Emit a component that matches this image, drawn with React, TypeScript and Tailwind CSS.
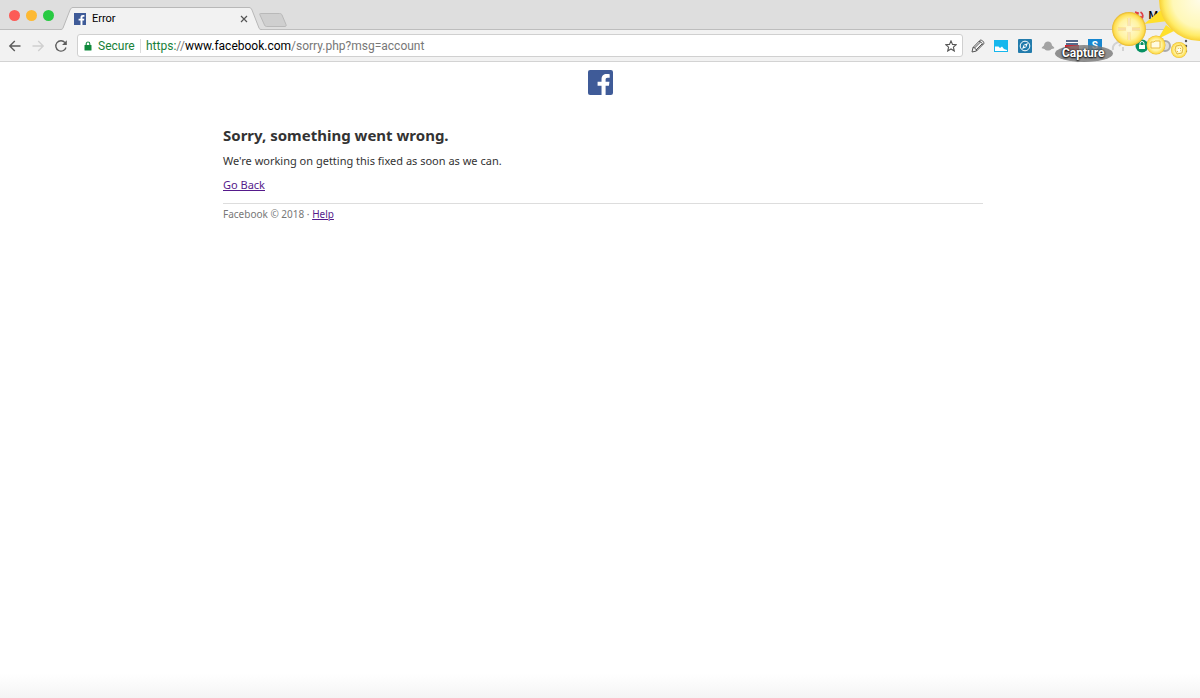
import { useState } from "react";

const TRAFFIC_LIGHTS = [
    { label: "Close window", color: "bg-[#fc5b57]" },
    { label: "Minimize window", color: "bg-[#fdb933]" },
    { label: "Zoom window", color: "bg-[#28ca42]" },
];

function FacebookIcon({ className, rounded }: { className: string; rounded?: boolean }) {
    return (
        <svg className={className} viewBox="0 0 24 24">
            <rect width="24" height="24" rx={rounded ? 2 : 0} fill="#3f5b98" />
            <path d="M13 24V15h-3.800v-3.700H13V8.800c0-3.200 2-4.900 4.900-4.900 1.100 0 2.200.1 2.900.2v3.300h-2c-1.500 0-1.900.8-1.900 1.900v2h3.700l-.5 3.700h-3.200v9z" fill="#fff" />
        </svg>
    );
}

function TabStrip() {
    return (
        <div className="flex h-[30px] bg-[#dedede] border-b border-[#bdbdbd]">
            <div className="flex gap-[6px] pl-[9px] pt-[10px] w-[60px] shrink-0">
                {TRAFFIC_LIGHTS.map((l) => (
                    <button key={l.label} aria-label={l.label} className={`w-[11px] h-[11px] rounded-full ${l.color}`} />
                ))}
            </div>
            <div className="relative w-[202px] h-[30px] shrink-0">
                <svg className="absolute inset-0" width="202" height="30" viewBox="0 0 202 30">
                    <path d="M0 30C2 30 2.500 29 3 28L10 10C10.800 8.300 11.500 7.500 13 7.500H189C190.500 7.500 191.200 8.300 192 10L199 28C199.500 29 200 30 202 30Z" fill="#f2f2f2" />
                    <path d="M0 29.500C2 29.500 2.500 29 3 28L10 10C10.800 8.300 11.500 7.500 13 7.500H189C190.500 7.500 191.200 8.300 192 10L199 28C199.500 29 200 29.500 202 29.500" fill="none" stroke="#b8b8b8" />
                </svg>
                <div className="relative flex items-center h-[22px] mt-2 px-[14px]">
                    <FacebookIcon className="w-3 h-3" />
                    <span className="ml-[6px] text-[11px] text-black">Error</span>
                    <button aria-label="Close tab" className="ml-auto">
                        <svg width="8" height="8" viewBox="0 0 8 8" stroke="#555" strokeWidth="1.200"><path d="M1 1l6 6M7 1L1 7" /></svg>
                    </button>
                </div>
            </div>
            <button aria-label="New tab" className="self-start mt-[12px] -ml-1">
                <svg width="30" height="16" viewBox="0 0 30 16">
                    <path d="M2.500 1.500H21.500C23 1.500 23.500 2 24 3L28 12.500C28.500 13.800 28 14.500 27 14.500H8.500C7.500 14.500 7 14 6.500 13L2 3C1.500 2 1.500 1.500 2.500 1.500Z" fill="#cfcfcf" stroke="#b9b9b9" />
                </svg>
            </button>
            <div className="ml-auto flex items-center h-[30px] pt-[2px] pr-[42px] gap-1">
                <svg width="10" height="12" viewBox="0 0 10 12" fill="none" stroke="#df3f46" strokeWidth="1.800">
                    <path d="M3 3.500C.5 5 .8 9 4 10.500M1 2l3 1-1 3M7 9c2.500-1.500 2.500-5-.5-7M9 10L6 9l1-3" />
                </svg>
                <span className="text-[11px] font-medium text-black">M</span>
            </div>
        </div>
    );
}

function Toolbar() {
    const [path, setPath] = useState("/sorry.php?msg=account");

    return (
        <div className="flex items-center h-8 pl-2 pr-3 bg-[#f2f2f2] border-b border-[#d3d3d3]">
            <nav className="flex items-center gap-[9px] w-[69px] shrink-0">
                <button aria-label="Back">
                    <svg width="14" height="14" viewBox="0 0 14 14" fill="none" stroke="#5c5c5c" strokeWidth="1.400"><path d="M12.500 7H2M6.800 2L1.800 7l5 5" /></svg>
                </button>
                <button aria-label="Forward" disabled>
                    <svg width="14" height="14" viewBox="0 0 14 14" fill="none" stroke="#d0d0d0" strokeWidth="1.400"><path d="M1.500 7H12M7.200 2l5 5-5 5" /></svg>
                </button>
                <button aria-label="Reload">
                    <svg width="14" height="14" viewBox="0 0 14 14" fill="none" stroke="#5c5c5c" strokeWidth="1.300">
                        <path d="M12 8.500A5.200 5.200 0 1 1 11 3.600" />
                        <path d="M12.800 1.300v4.700H8.100z" fill="#5c5c5c" stroke="none" />
                    </svg>
                </button>
            </nav>

            {/* Address bar */}
            <div className="flex items-center grow h-[23px] pl-[6px] pr-[5px] bg-white rounded-[3px] border border-[#d0d0d0] text-[12px]">
                <svg width="8" height="10" viewBox="0 0 8 10">
                    <path d="M2.200 5V2.800a1.800 1.800 0 0 1 3.600 0V5" fill="none" stroke="#0f8a3c" strokeWidth="1.100" />
                    <rect x=".5" y="4" width="7" height="5.500" rx=".6" fill="#0f8a3c" />
                </svg>
                <span className="ml-[6px] w-[43px] h-[14px] leading-[14px] border-r border-[#dcdcdc] text-[#188038]">Secure</span>
                <label htmlFor="url" className="ml-[5px] text-black">
                    <span className="text-[#188038]">https:</span><span className="text-[#777]">//</span>www.facebook.com
                </label>
                <input id="url" className="grow min-w-0 bg-transparent outline-none text-[#777]" value={path} onChange={(e) => setPath(e.target.value)} />
                <button aria-label="Bookmark this page">
                    <svg width="12" height="12" viewBox="0 0 12 12" fill="none" stroke="#555" strokeWidth="1.100"><path d="M6 .9l1.500 3.500 3.800.3-2.900 2.500.9 3.800L6 9l-3.300 2 .9-3.800L.7 4.700l3.800-.3z" /></svg>
                </button>
            </div>

            {/* Extensions */}
            <div className="flex items-center justify-between w-[201px] ml-2 shrink-0">
                <button aria-label="Highlighter">
                    <svg width="14" height="14" viewBox="0 0 14 14" fill="none" stroke="#555" strokeWidth="1"><path d="M1 13l1-4.500L9 1.300c1.300-1 4.700 1.700 3.700 3.500L5.500 12zM2 8.500c1.800 0 3.200 1.500 3.500 3.500M8 2.300c1.700.2 3.400 1.700 3.700 3.400M3.500 9l6-6M5 11l6-6" /></svg>
                </button>
                <button aria-label="Window panes">
                    <svg width="14" height="14" viewBox="0 0 14 14">
                        <rect y="1" width="14" height="12" fill="#16b7ed" />
                        <path d="M1 7.500h3.500L6 9l2-1.500L10 10l3 1v1H1z" fill="#fff" />
                    </svg>
                </button>
                <button aria-label="Compass">
                    <svg width="14" height="14" viewBox="0 0 14 14">
                        <rect width="14" height="14" rx="1" fill="#237cac" />
                        <circle cx="7" cy="7" r="4.800" fill="none" stroke="#fff" />
                        <path d="M10 4L8.200 8.200 4 10l1.800-4.200z" fill="#fff" />
                        <circle cx="7" cy="7" r=".9" fill="#237cac" />
                    </svg>
                </button>
                <button aria-label="Hat">
                    <svg width="14" height="14" viewBox="0 0 14 14" fill="#a3a3a3"><path d="M3 6.500C3.200 1 10.800 1 11 6.500l2 1.700C14 9.800 11.500 9.600 10.500 10c-1.500 2-5.500 2-7 0C2.500 9.600 0 9.800 1 8.200z" /></svg>
                </button>
                <button aria-label="Notes">
                    <svg width="14" height="14" viewBox="0 0 14 14"><path d="M1 1h12v6H1z" fill="#566a8c" /><path d="M1 3.500h12" stroke="#fff" /><path d="M0 6h14v7H0z" fill="#cf2833" /></svg>
                </button>
                <button className="w-[14px] h-[13px] bg-[#1686d0] text-white text-[10px] leading-[13px] font-bold">S</button>
                <button aria-label="Sync">
                    <svg width="14" height="14" viewBox="0 0 14 14" fill="none" stroke="#d2d2d2" strokeWidth="2"><path d="M2 11C1 6 5 3 9 3M8 1l3 3-3 3M12 8v4" /></svg>
                </button>
                <button aria-label="Password vault">
                    <svg width="14" height="14" viewBox="0 0 14 14"><circle cx="7" cy="7" r="6.500" fill="#079163" /><path d="M5 6V4.500a2 2 0 0 1 4 0V6" fill="none" stroke="#fff" /><path d="M4 6h6v4H4z" fill="#fff" /></svg>
                </button>
                <button aria-label="Info">
                    <svg width="14" height="14" viewBox="0 0 14 14"><circle cx="7" cy="7" r="5" fill="#ddd" stroke="#aaa" strokeWidth="2" /></svg>
                </button>
            </div>
            <button aria-label="Menu" className="ml-3 shrink-0">
                <svg width="4" height="14" viewBox="0 0 4 14" fill="#555"><circle cx="2" cy="2" r="1.200" /><circle cx="2" cy="7" r="1.200" /><circle cx="2" cy="12" r="1.200" /></svg>
            </button>
        </div>
    );
}

// Screen-capture sun that floats over the top right corner of the browser
function CaptureOverlay() {
    return (
        <div className="absolute top-0 right-0 w-[150px] h-16 pointer-events-none overflow-hidden">
            <div className="absolute left-[5px] top-[45px] w-[58px] h-[17px] rounded-[50%] bg-[#777]/80" />
            <span className="absolute left-[12px] top-[46px] text-[12px] leading-[14px] font-bold text-white [text-shadow:0_0_2px_#000,0_1px_2px_#000]">Capture</span>
            <svg className="absolute inset-0" width="150" height="64" viewBox="0 0 150 64">
                <defs>
                    <radialGradient id="sun" gradientUnits="userSpaceOnUse" cx="150" cy="0" r="42">
                        <stop offset="0" stopColor="#fffce8" />
                        <stop offset=".65" stopColor="#fff8b8" />
                        <stop offset=".85" stopColor="#ffec69" />
                        <stop offset="1" stopColor="#f7cb28" />
                    </radialGradient>
                    <radialGradient id="orb">
                        <stop offset="0" stopColor="#fff9d6" />
                        <stop offset=".6" stopColor="#fff3a0" />
                        <stop offset=".88" stopColor="#ffde50" />
                        <stop offset="1" stopColor="#e5b52b" />
                    </radialGradient>
                </defs>
                <path d="M94 24L111 10l7 11zM108 39l8-14 8 6z" fill="#ffe02b" />
                <circle cx="150" cy="0" r="41" fill="url(#sun)" />
                <circle cx="79" cy="29" r="17" fill="url(#orb)" />
                <path d="M79 18v8M79 32v8M68 29h8M82 29h8" stroke="#f0b84a" strokeWidth="2.400" />
                <path d="M79 18v8M79 32v8M68 29h8M82 29h8" stroke="#fff" strokeWidth="1.200" />
                <circle cx="106" cy="45" r="9.500" fill="url(#orb)" />
                <path d="M101 42h3l1-1h5v7h-9z" fill="#fffbe2" stroke="#e5ae20" strokeWidth=".8" />
                <circle cx="129" cy="50" r="8" fill="url(#orb)" />
                <path d="M126 46l5-1 2 3-1 5-5 1-2-4zM128 48l3 3M131 48l-4 4" fill="none" stroke="#d9a522" strokeWidth=".8" />
                <circle cx="129" cy="50" r="1.500" fill="#fff" />
            </svg>
        </div>
    );
}

export default function App() {
    return (
        <div className="relative flex flex-col min-h-screen bg-white font-['Roboto',sans-serif]">
            <header>
                <TabStrip />
                <Toolbar />
            </header>
            <CaptureOverlay />

            <main className="grow flex flex-col items-center pt-2 font-['Noto_Sans',sans-serif] text-[#333]">
                <FacebookIcon className="w-[25px] h-[25px]" rounded />
                <div className="w-full max-w-[766px] pl-[6px] pt-[30px]">
                    <h1 className="text-[15px] leading-5 font-bold">Sorry, something went wrong.</h1>
                    <p className="mt-2 text-[11px] leading-4">We're working on getting this fixed as soon as we can.</p>
                    <p className="mt-2 text-[11px] leading-4"><a href="#back" className="text-[#551a8b] underline">Go Back</a></p>
                    <footer className="mt-[10px] pt-[2px] border-t border-[#ddd] text-[10px] leading-4 text-[#777]">
                        Facebook © 2018 · <a href="#help" className="text-[#551a8b] underline">Help</a>
                    </footer>
                </div>
            </main>
            <div className="h-6 bg-linear-to-b from-white to-[#f4f4f4]" />
        </div>
    );
}
